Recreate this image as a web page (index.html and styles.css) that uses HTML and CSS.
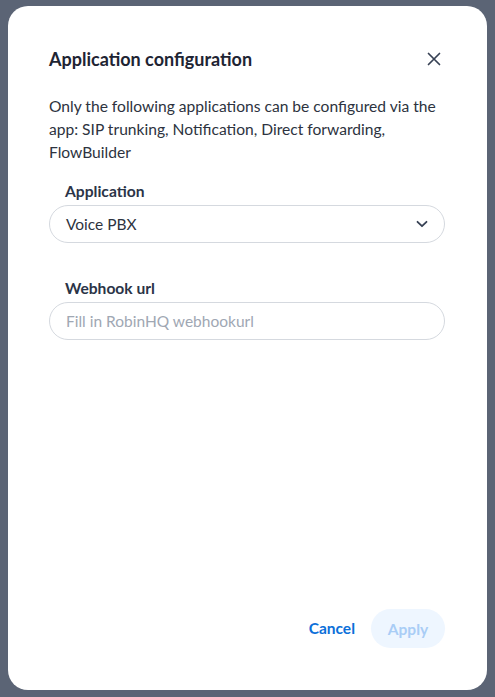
FILE: index.html
```html
<!DOCTYPE html>
<html>
	<head>
		<meta charset="UTF-8">
		<title>Application configuration</title>
		<link rel="stylesheet" href="styles.css">
	</head>
	<body>
		<div class="modal">
			<div class="modal-head">
				<h2>Application configuration</h2>
				<button class="close" type="button" aria-label="Close">
					<svg width="14" height="14" viewBox="0 0 14 14"><path d="M1.5 1.5L12.5 12.5M12.5 1.5L1.5 12.5" stroke="#374154" stroke-width="1.7" stroke-linecap="round"/></svg>
				</button>
			</div>
			<p class="intro">Only the following applications can be configured via the app: SIP trunking, Notification, Direct forwarding, FlowBuilder</p>

			<div class="field">
				<label>Application</label>
				<div class="select">
					<span>Voice PBX</span>
					<svg width="12" height="8" viewBox="0 0 12 8"><path d="M1.5 1.8L6 6.2L10.5 1.8" fill="none" stroke="#374154" stroke-width="1.8" stroke-linecap="round" stroke-linejoin="round"/></svg>
				</div>
			</div>

			<div class="field field-url">
				<label>Webhook url</label>
				<input class="input" type="text" placeholder="Fill in RobinHQ webhookurl">
			</div>

			<div class="modal-foot">
				<button class="btn-link" type="button">Cancel</button>
				<button class="btn-apply" type="button" disabled>Apply</button>
			</div>
		</div>
	</body>
</html>
```

FILE: styles.css
```css
*{
	margin: 0;
	padding: 0;
	box-sizing: border-box;
}
body{
	background: #5b6475;
	font-family: "Lato", "Noto Sans", sans-serif;
	color: #2b3242;
}
.modal{
	margin: 6px 8px;
	height: 684px;
	background: #fff;
	border-radius: 20px;
	padding: 41px 42px 42px 41px;
	display: flex;
	flex-direction: column;
}
.modal-head{
	display: flex;
	align-items: center;
	justify-content: space-between;
	height: 24px;
}
.modal-head h2{
	font-size: 18px;
	font-weight: 700;
	color: #1e2433;
	line-height: 24px;
}
.close{
	border: 0;
	background: none;
	width: 14px;
	height: 14px;
	margin-right: 4px;
	display: flex;
}
.intro{
	margin-top: 24px;
	font-size: 15.6px;
	line-height: 23px;
	color: #2d3340;
}
.field{
	margin-top: 17px;
}
.field-url{
	margin-top: 35px;
}
.field label{
	display: block;
	padding-left: 16px;
	font-size: 15.6px;
	font-weight: 700;
	line-height: 20px;
	color: #2b3447;
	margin-bottom: 4px;
}
.select, .input{
	height: 38px;
	width: 100%;
	border: 1.5px solid #d5d9df;
	border-radius: 19px;
	padding: 0 16px;
	font-family: inherit;
	font-size: 15.5px;
	color: #2d3340;
	background: #fff;
}
.select{
	display: flex;
	align-items: center;
	justify-content: space-between;
}
.input::placeholder{
	color: #a0a7b3;
}
.modal-foot{
	margin-top: auto;
	display: flex;
	justify-content: flex-end;
	align-items: center;
	gap: 16px;
}
.btn-link{
	border: 0;
	background: none;
	font-family: inherit;
	font-size: 15.5px;
	font-weight: 700;
	color: #0b6fd9;
	margin-top: -1px;
}
.btn-apply{
	border: 0;
	height: 39px;
	width: 74px;
	border-radius: 20px;
	background: #eef6ff;
	font-family: inherit;
	font-size: 15.5px;
	font-weight: 700;
	color: #a9cdf6;
}
```
